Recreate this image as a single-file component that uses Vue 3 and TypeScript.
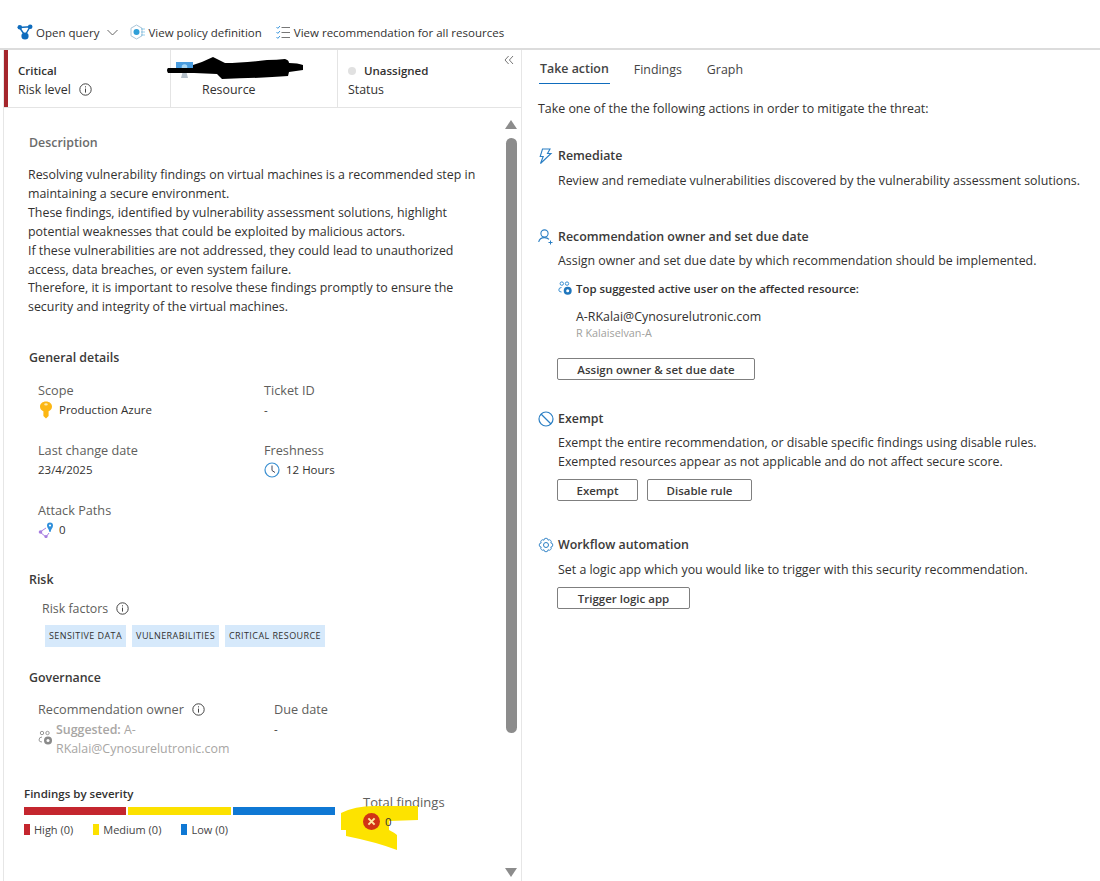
<script setup lang="ts">
interface Field {
  label: string;
  value: string;
  icon?: string;
}

const fields: Field[] = [
  { label: "Scope", value: "Production Azure", icon: "key" },
  { label: "Ticket ID", value: "-" },
  { label: "Last change date", value: "23/4/2025" },
  { label: "Freshness", value: "12 Hours", icon: "clock" },
  { label: "Attack Paths", value: "0", icon: "path" },
];

const chips = ["SENSITIVE DATA", "VULNERABILITIES", "CRITICAL RESOURCE"];

const legend = [
  { label: "High (0)", color: "#c4262e" },
  { label: "Medium (0)", color: "#fce100" },
  { label: "Low (0)", color: "#0f78d4" },
];

const description = [
  "Resolving vulnerability findings on virtual machines is a recommended step in maintaining a secure environment.",
  "These findings, identified by vulnerability assessment solutions, highlight potential weaknesses that could be exploited by malicious actors.",
  "If these vulnerabilities are not addressed, they could lead to unauthorized access, data breaches, or even system failure.",
  "Therefore, it is important to resolve these findings promptly to ensure the security and integrity of the virtual machines.",
];
</script>

<template>
  <div class="page">
    <header class="toolbar">
      <button class="tool">
        <svg width="16" height="17" viewBox="0 0 16 17"><path d="M2.5 3.5 L13 2.8 M2.5 3.5 L8 11.5 M13 2.8 L8 11.5" stroke="#0f6cbd" stroke-width="1.4" fill="none" /><circle cx="2.8" cy="3.2" r="2.3" fill="#0f6cbd" /><circle cx="13.2" cy="2.8" r="2.3" fill="#0f6cbd" /><circle cx="8" cy="12" r="3.6" fill="#0f6cbd" /></svg>
        <span>Open query</span>
        <svg class="chev" width="11" height="7" viewBox="0 0 11 7"><path d="M0.5 1 L5.5 6 L10.5 1" stroke="#666" fill="none" /></svg>
      </button>
      <button class="tool policy">
        <svg width="15" height="16" viewBox="0 0 15 16"><path d="M6.5 1 L12 4.2 V11.8 L6.5 15 L1 11.8 V4.2 Z" stroke="#a9c4d8" fill="none" /><circle cx="6.5" cy="8" r="3" fill="#2f9fd8" /><path d="M11.5 5 h3 M11.5 8 h3 M11.5 11 h3" stroke="#2f9fd8" stroke-dasharray="1 1" /></svg>
        <span>View policy definition</span>
      </button>
      <button class="tool all">
        <svg width="14" height="14" viewBox="0 0 14 14"><path d="M0.5 2 L1.8 3.4 L4 1 M0.5 7 L1.8 8.4 L4 6 M0.5 12 L1.8 13.4 L4 11" stroke="#3a96dd" fill="none" /><path d="M5.5 2.5 H14 M5.5 7.5 H14 M5.5 12.5 H14" stroke="#777" fill="none" /></svg>
        <span>View recommendation for all resources</span>
      </button>
    </header>

    <main class="split">
      <section class="left">
        <div class="summary">
          <div class="cell risk">
            <strong>Critical</strong>
            <span class="with-icon">Risk level
              <svg class="info" width="13" height="13" viewBox="0 0 13 13"><circle cx="6.5" cy="6.5" r="5.7" stroke="#444" fill="none" /><path d="M6.5 5.6 V9.6 M6.5 3.3 V4.4" stroke="#444" fill="none" /></svg>
            </span>
          </div>
          <div class="cell resource">
            <svg class="vm" width="17" height="16" viewBox="0 0 17 16"><rect x="0" y="0" width="17" height="10.5" fill="#4a9de0" /><circle cx="8.5" cy="5" r="2.8" fill="#a8d8f5" /><path d="M5 16 H12 L10.5 10.5 H6.5 Z" fill="#b6c1ca" /></svg>
            <span class="resource-label">Resource</span>
          </div>
          <div class="cell status">
            <strong class="with-dot"><i class="dot"></i>Unassigned</strong>
            <span>Status</span>
            <svg class="collapse" width="10" height="10" viewBox="0 0 10 10"><path d="M4.6 1 L1 5 L4.6 9 M9 1 L5.4 5 L9 9" stroke="#777" fill="none" /></svg>
          </div>
          <svg class="redaction" width="137" height="23" viewBox="0 0 137 23"><path d="M1 11 L26 11 L26 8 Q36 5 46 0 Q52 3 58 6 Q76 6 100 3 Q110 3 118 2 Q122 3 122 6 Q131 6 136 8 L136 13 L122 15 L121 19 Q95 21 55 22 L50 17 L27 16 L1 16 Q-1 13 1 11 Z" fill="#000" /></svg>
        </div>

        <div class="detail">
          <div class="scroll-content">
            <h3 class="muted-title">Description</h3>
            <div class="description">
              <p v-for="line in description" :key="line">{{ line }}</p>
            </div>

            <h3 class="title general">General details</h3>
            <div class="fields">
              <div v-for="field in fields" :key="field.label" class="field">
                <div class="label">{{ field.label }}</div>
                <div class="value">
                  <svg v-if="field.icon === 'key'" class="key" width="12" height="18" viewBox="0 0 12 18"><path d="M6 0.5 C9.5 0.5 12 2.8 12 5.5 C12 8 10.5 9.6 8.6 10.3 V15 L6 17.5 L3.4 15 V10.3 C1.5 9.6 0 8 0 5.5 C0 2.8 2.5 0.5 6 0.5 Z" fill="#fcb714" /><ellipse cx="6" cy="3.4" rx="1.8" ry="1.1" fill="#fde9b0" /></svg>
                  <svg v-if="field.icon === 'clock'" class="clock" width="16" height="16" viewBox="0 0 16 16"><circle cx="8" cy="8" r="7" stroke="#3a8fd1" stroke-width="1.2" fill="none" /><path d="M8 3.5 V8.5 L11 10.5" stroke="#445" fill="none" /></svg>
                  <svg v-if="field.icon === 'path'" width="16" height="16" viewBox="0 0 16 16"><path d="M2 10 L8 6 M2 10 L8 15 L11 11" stroke="#a77ee0" fill="none" /><circle cx="2.5" cy="10" r="1.8" fill="#a77ee0" /><circle cx="8" cy="14.5" r="1.6" fill="#a77ee0" /><path d="M12 0.5 A3 3 0 0 1 15 3.5 C15 6 13 7 12.5 10 H11.5 C11 7 9 6 9 3.5 A3 3 0 0 1 12 0.5 Z" fill="#2f8fdb" /><circle cx="12" cy="3.5" r="1.1" fill="#fff" /></svg>
                  <span>{{ field.value }}</span>
                </div>
              </div>
            </div>

            <h3 class="title risk-title">Risk</h3>
            <div class="risk-factors with-icon">Risk factors
              <svg class="info" width="13" height="13" viewBox="0 0 13 13"><circle cx="6.5" cy="6.5" r="5.7" stroke="#444" fill="none" /><path d="M6.5 5.6 V9.6 M6.5 3.3 V4.4" stroke="#444" fill="none" /></svg>
            </div>
            <div class="chips">
              <span v-for="chip in chips" :key="chip" class="chip">{{ chip }}</span>
            </div>

            <h3 class="title governance">Governance</h3>
            <div class="owner-row">
              <div class="owner">
                <div class="label with-icon">Recommendation owner
                  <svg class="info" width="13" height="13" viewBox="0 0 13 13"><circle cx="6.5" cy="6.5" r="5.7" stroke="#444" fill="none" /><path d="M6.5 5.6 V9.6 M6.5 3.3 V4.4" stroke="#444" fill="none" /></svg>
                </div>
                <div class="suggested">
                  <svg width="16" height="16" viewBox="0 0 16 16"><circle cx="4" cy="3" r="1.7" stroke="#999" fill="none" /><circle cx="9.5" cy="3" r="1.7" stroke="#999" fill="none" /><path d="M4 7 Q1 7 1 10 Q1 12 4 12" stroke="#999" fill="none" /><circle cx="10" cy="10.5" r="4" fill="#8a8a8a" /><circle cx="10" cy="10.5" r="1.5" fill="#fff" /></svg>
                  <div>
                    <div><b>Suggested:</b> A-</div>
                    <div>RKalai@Cynosurelutronic.com</div>
                  </div>
                </div>
              </div>
              <div class="due">
                <div class="label">Due date</div>
                <div class="value">-</div>
              </div>
            </div>

            <div class="findings">
              <div class="severity">
                <div class="severity-title">Findings by severity</div>
                <div class="bars">
                  <span v-for="item in legend" :key="item.label" class="bar" :style="{ background: item.color }"></span>
                </div>
                <div class="legend">
                  <span v-for="item in legend" :key="item.label" class="legend-item">
                    <i :style="{ background: item.color }"></i>{{ item.label }}
                  </span>
                </div>
              </div>
              <div class="total">
                <div class="label total-label">Total findings</div>
                <svg class="highlight" width="77" height="45" viewBox="0 0 77 45"><path d="M0 7 Q14 0 33 0 H77 V14 L48 15 V24 Q54 27 56 29 V44 Q35 36 5 30 V24 L0 24 Z" fill="#fde300" /></svg>
                <div class="total-value">
                  <svg width="17" height="17" viewBox="0 0 17 17"><circle cx="8.5" cy="8.5" r="8.5" fill="#d13415" /><path d="M5.4 5.4 L11.6 11.6 M11.6 5.4 L5.4 11.6" stroke="#ffe9a0" stroke-width="2" /></svg>
                  <span>0</span>
                </div>
              </div>
            </div>
          </div>

          <div class="scrollbar">
            <i class="arrow up"></i>
            <div class="track"><div class="thumb"></div></div>
            <i class="arrow down"></i>
          </div>
        </div>
      </section>

      <section class="right">
        <nav class="tabs">
          <a class="tab active">Take action</a>
          <a class="tab">Findings</a>
          <a class="tab">Graph</a>
        </nav>
        <p class="intro">Take one of the the following actions in order to mitigate the threat:</p>

        <div class="action remediate">
          <h4>
            <svg width="16" height="16" viewBox="0 0 16 16"><path d="M4.5 1 H12 L9.5 5.5 H13 L2.5 15.5 L5.2 8.5 H2.2 Z" stroke="#2b7fc4" stroke-width="1.1" fill="none" /></svg>
            Remediate
          </h4>
          <p>Review and remediate vulnerabilities discovered by the vulnerability assessment solutions.</p>
        </div>

        <div class="action owner-action">
          <h4>
            <svg width="16" height="16" viewBox="0 0 16 16"><circle cx="6.5" cy="4.5" r="3.6" stroke="#2b7fc4" stroke-width="1.1" fill="none" /><path d="M0.7 13 Q1.5 8.6 6.5 8.6 Q9.5 8.6 11 10.4" stroke="#2b7fc4" stroke-width="1.1" fill="none" /><path d="M12.5 11.5 V15.5 M10.5 13.5 H14.5" stroke="#2b7fc4" fill="none" /></svg>
            Recommendation owner and set due date
          </h4>
          <p>Assign owner and set due date by which recommendation should be implemented.</p>
          <div class="top-user">
            <svg width="15" height="15" viewBox="0 0 15 15"><circle cx="3.8" cy="2.6" r="1.7" stroke="#3a8fd1" fill="none" /><circle cx="9" cy="2.6" r="1.7" stroke="#3a8fd1" fill="none" /><path d="M3.5 6.5 Q0.8 6.5 0.8 9 Q0.8 11 3.5 11" stroke="#3a8fd1" fill="none" /><circle cx="9.7" cy="9.7" r="4" fill="#1f76bd" /><circle cx="9.7" cy="9.7" r="1.5" fill="#fff" /></svg>
            <span>Top suggested active user on the affected resource:</span>
          </div>
          <div class="user-mail">A-RKalai@Cynosurelutronic.com</div>
          <div class="user-name">R Kalaiselvan-A</div>
          <div class="buttons"><button class="btn assign">Assign owner &amp; set due date</button></div>
        </div>

        <div class="action exempt">
          <h4>
            <svg width="16" height="16" viewBox="0 0 16 16"><circle cx="8" cy="8" r="7" stroke="#2b7fc4" stroke-width="1.2" fill="none" /><path d="M3 3 L13 13" stroke="#2b7fc4" stroke-width="1.2" /></svg>
            Exempt
          </h4>
          <p>Exempt the entire recommendation, or disable specific findings using disable rules.<br />Exempted resources appear as not applicable and do not affect secure score.</p>
          <div class="buttons">
            <button class="btn exempt-btn">Exempt</button>
            <button class="btn disable">Disable rule</button>
          </div>
        </div>

        <div class="action workflow">
          <h4>
            <svg width="16" height="16" viewBox="0 0 16 16"><path d="M12.8 10 A2 2 0 0 1 10 12.8 A2 2 0 0 1 6 12.8 A2 2 0 0 1 3.2 10 A2 2 0 0 1 3.2 6 A2 2 0 0 1 6 3.2 A2 2 0 0 1 10 3.2 A2 2 0 0 1 12.8 6 A2 2 0 0 1 12.8 10 Z" stroke="#2b7fc4" stroke-width="0.9" fill="none" /><circle cx="8" cy="8" r="2.5" stroke="#2b7fc4" fill="none" /></svg>
            Workflow automation
          </h4>
          <p>Set a logic app which you would like to trigger with this security recommendation.</p>
          <div class="buttons"><button class="btn trigger">Trigger logic app</button></div>
        </div>
      </section>
    </main>
  </div>
</template>

<style scoped>
.page {
  width: 1100px;
  height: 881px;
  overflow: hidden;
  background: #fff;
  color: #323130;
  font-family: "Open Sans", "Noto Sans", sans-serif;
  font-size: 12.4px;
  line-height: 19px;
  display: flex;
  flex-direction: column;
}

h3, h4, p {
  margin: 0;
  font-size: inherit;
}

button {
  font: inherit;
  color: inherit;
}

.toolbar {
  height: 50px;
  box-sizing: border-box;
  padding: 16px 0 0 17px;
  display: flex;
  align-items: center;
  gap: 12px;
  border-bottom: 2px solid #dcdcdc;
  flex: none;
  font-size: 11.5px;
}

.tool {
  display: flex;
  align-items: center;
  gap: 3px;
  background: none;
  border: 0;
  padding: 0;
}

.tool.policy {
  gap: 4px;
}

.tool.all {
  margin-left: 2px;
  gap: 4px;
}

.chev {
  margin-left: 4px;
}

.split {
  flex: 1;
  display: flex;
  min-height: 0;
}

.left {
  width: 517px;
  margin-left: 3px;
  border-left: 1px solid #e6e6e6;
  border-right: 1px solid #e6e6e6;
  display: flex;
  flex-direction: column;
  flex: none;
}

.summary {
  position: relative;
  display: flex;
  height: 58px;
  flex: none;
  border-bottom: 1px solid #e4e4e4;
  box-sizing: border-box;
}

.cell {
  display: flex;
  flex-direction: column;
  padding: 11px 0 0 10px;
  border-right: 1px solid #e4e4e4;
  box-sizing: border-box;
}

.cell strong {
  font-weight: 600;
  font-size: 11.5px;
}

.risk {
  width: 167px;
  border-left: 4px solid #a4262c;
}

.resource {
  width: 167px;
  padding-left: 31px;
  padding-top: 30px;
  position: relative;
}

.vm {
  position: absolute;
  left: 5px;
  top: 12px;
}

.status {
  flex: 1;
  border-right: 0;
  position: relative;
  padding-left: 10px;
}

.with-dot {
  display: flex;
  align-items: center;
}

.dot {
  width: 8px;
  height: 8px;
  border-radius: 50%;
  background: #e1e1e1;
  margin-right: 8px;
}

.collapse {
  position: absolute;
  right: 7px;
  top: 5px;
}

.redaction {
  position: absolute;
  left: 163px;
  top: 7px;
}

.with-icon {
  display: flex;
  align-items: center;
  gap: 8px;
}

.detail {
  flex: 1;
  display: flex;
  min-height: 0;
}

.scroll-content {
  flex: 1;
  padding: 25px 0 0 25px;
  min-width: 0;
}

.muted-title {
  color: #6b6b6b;
  font-weight: 600;
}

.description {
  margin: 14px 0 0 -1px;
  width: 456px;
  line-height: 18.9px;
}

.title {
  font-weight: 600;
  color: #3b3a39;
}

.general {
  margin-top: 31px;
}

.fields {
  display: grid;
  grid-template-columns: 226px 1fr;
  row-gap: 22px;
  padding-left: 9px;
  margin-top: 14px;
}

.label {
  color: #605e5c;
  font-size: 12.7px;
}

.value {
  display: flex;
  align-items: center;
  gap: 5px;
  font-size: 11.5px;
}

.key {
  margin: 0 2px;
}

.clock {
  margin-right: 1px;
}

.risk-title {
  margin-top: 31px;
}

.risk-factors {
  margin: 10px 0 0 13px;
  color: #605e5c;
}

.chips {
  display: flex;
  gap: 6px;
  margin: 7px 0 0 16px;
}

.chip {
  background: #d6e9fb;
  font-size: 9px;
  line-height: 22px;
  height: 22px;
  padding: 0 4px;
  letter-spacing: 0.42px;
}

.governance {
  margin-top: 21px;
}

.owner-row {
  display: flex;
  margin: 13px 0 0 9px;
}

.owner {
  width: 236px;
}

.suggested {
  display: flex;
  color: #a8a6a4;
  width: 200px;
  align-items: flex-start;
  gap: 2px;
  margin-top: 1px;
}

.suggested svg {
  flex: none;
  margin-top: 10px;
}

.suggested b {
  font-weight: 600;
}

.findings {
  display: flex;
  margin: 26px 0 0 -5px;
}

.severity {
  width: 339px;
  font-size: 11px;
}

.severity-title {
  font-weight: 600;
  font-size: 11.5px;
}

.bars {
  display: flex;
  gap: 2px;
  width: 311px;
  margin-top: 4px;
}

.bar {
  flex: 1;
  height: 8px;
}

.legend {
  display: flex;
  margin-top: 5px;
  gap: 20px;
}

.legend-item {
  display: flex;
  align-items: center;
  gap: 4px;
  color: #444;
}

.legend-item i {
  width: 6px;
  height: 11px;
}

.total {
  position: relative;
  padding-top: 9px;
}

.total-label {
  font-size: 13px;
}

.highlight {
  position: absolute;
  left: -22px;
  top: 22px;
}

.total-value {
  position: relative;
  display: flex;
  align-items: center;
  gap: 5px;
  font-size: 11.5px;
}

.scrollbar {
  width: 12px;
  margin: 8px 4px 0 0;
  display: flex;
  flex-direction: column;
  align-items: center;
  flex: none;
}

.track {
  flex: 1;
  padding-top: 9px;
}

.thumb {
  width: 11px;
  height: 595px;
  background: #8c8c8c;
  border-radius: 6px;
}

.arrow {
  width: 0;
  height: 0;
  border-left: 6px solid transparent;
  border-right: 6px solid transparent;
}

.arrow.up {
  border-bottom: 9px solid #8c8c8c;
  margin-top: 4px;
}

.arrow.down {
  border-top: 9px solid #8c8c8c;
  margin-bottom: 4px;
}

.right {
  flex: 1;
  padding: 0 0 0 16px;
}

.tabs {
  display: flex;
  gap: 23px;
  height: 34px;
  margin-left: 1px;
  align-items: flex-end;
}

.tab {
  display: block;
  padding: 0 1px 5px 1px;
  color: #444;
}

.tab.active {
  font-weight: 600;
  border-bottom: 1.5px solid #0f6cbd;
}

.intro {
  margin-top: 15px;
}

.action h4 {
  font-weight: 600;
  display: flex;
  align-items: center;
  gap: 4px;
  color: #3b3a39;
}

.action p {
  margin: 6px 0 0 20px;
}

.remediate {
  margin-top: 28px;
}

.owner-action {
  margin-top: 37px;
}

.owner-action p {
  margin-top: 5px;
}

.top-user {
  display: flex;
  align-items: center;
  gap: 3px;
  margin: 9px 0 0 20px;
  font-size: 11.4px;
  font-weight: 600;
}

.user-mail {
  margin: 9px 0 0 38px;
}

.user-name {
  margin: -1px 0 0 38px;
  font-size: 10.8px;
  color: #a19f9d;
  line-height: 15px;
}

.buttons {
  display: flex;
  gap: 9px;
  margin-left: 19px;
}

.btn {
  height: 22px;
  padding: 0;
  background: #fff;
  border: 1px solid #7f7f7f;
  border-radius: 2px;
  font-size: 11.5px;
  font-weight: 600;
  color: #3b3a39;
}

.owner-action .buttons {
  margin-top: 18px;
}

.assign {
  width: 198px;
}

.exempt {
  margin-top: 29px;
}

.exempt p {
  margin-top: 5px;
}

.exempt .buttons {
  margin-top: 8px;
}

.exempt-btn {
  width: 81px;
}

.disable {
  width: 105px;
}

.workflow {
  margin-top: 34px;
}

.workflow .buttons {
  margin-top: 8px;
}

.trigger {
  width: 133px;
}
</style>
